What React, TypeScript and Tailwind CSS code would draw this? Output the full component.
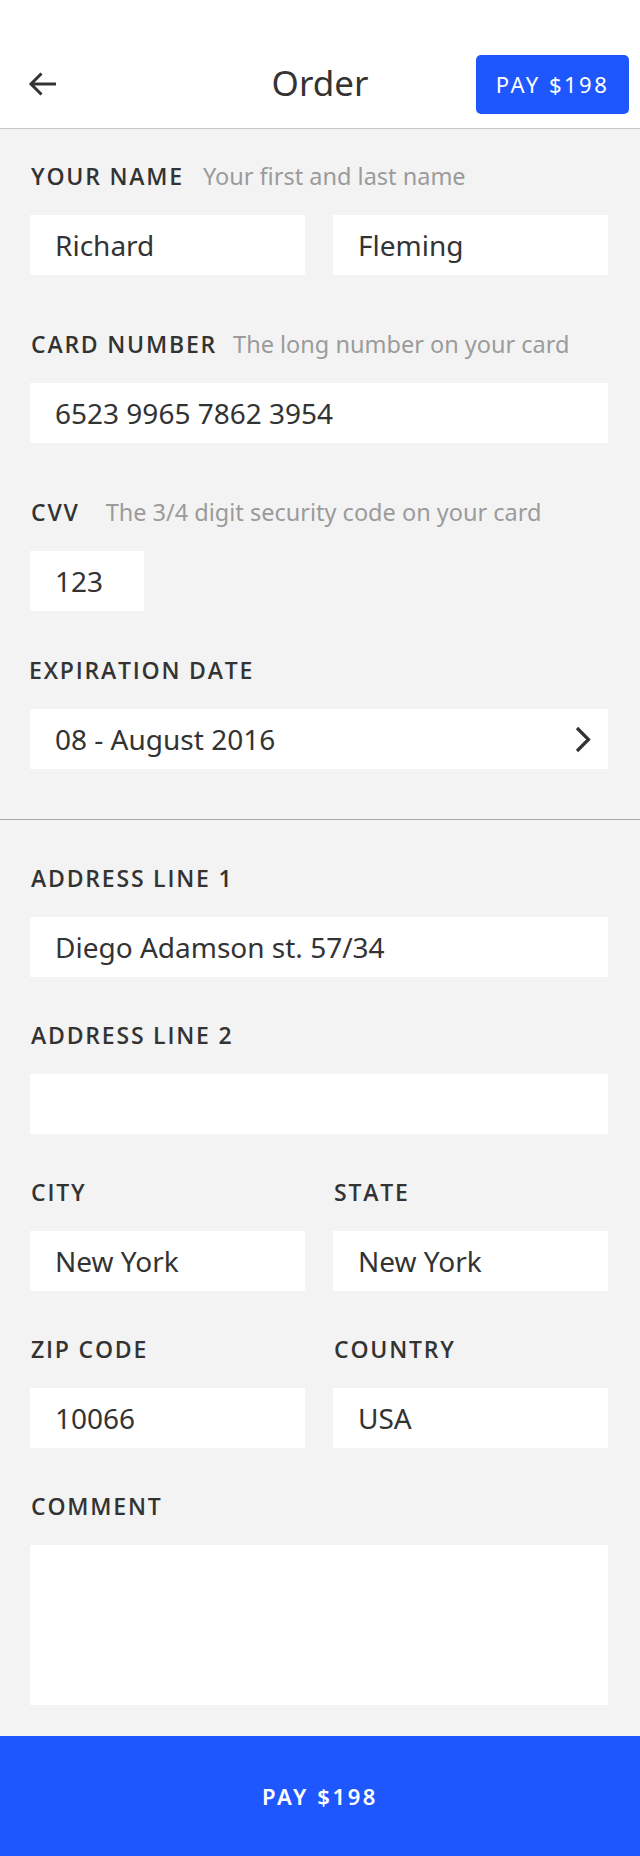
import React from 'react';

const font = { fontFamily: '"Noto Sans", "Open Sans", sans-serif' };
const labelFont = { fontFamily: '"Open Sans", "Noto Sans", sans-serif' };

function Label({ text, hint, hintGap = 'ml-[20px]', className = '' }: { text: string; hint?: string; hintGap?: string; className?: string }) {
  return (
    <div className={`flex items-baseline h-8 leading-8 pl-px ${className}`}>
      <span className="text-[23px] font-semibold tracking-[1.8px] text-[#333]" style={labelFont}>
        {text}
      </span>
      {hint && <span className={`text-[23.5px] text-[#9b9b9b] ${hintGap}`}>{hint}</span>}
    </div>
  );
}

function Box({ value, className = '', children }: { value?: string; className?: string; children?: React.ReactNode }) {
  return (
    <div className={`h-[60px] bg-white flex items-center pl-[25px] text-[28px] text-[#333] ${className}`}>
      <span className="flex-1">{value}</span>
      {children}
    </div>
  );
}

export default function App() {
  return (
    <div className="w-[640px] h-[1856px] bg-[#f3f3f3] flex flex-col" style={font}>
      <header className="bg-white pt-10 border-b border-[#c8c8c8]">
        <div className="h-[88px] px-[11px] grid grid-cols-[1fr_auto_1fr] items-center">
          <div className="pl-[17px]">
            <svg width="28" height="24" viewBox="0 0 28 24" fill="none" stroke="#333" strokeWidth="3">
              <path d="M28 12H3" />
              <path d="M13.5 1.5L3 12l10.5 10.5" />
            </svg>
          </div>
          <h1 className="text-[35px] text-[#333] leading-none -mt-[4px]">Order</h1>
          <div className="flex justify-end">
            <button className="w-[153px] h-[59px] rounded-[5px] bg-[#1f57ff] text-white text-[22px] tracking-[2.5px]">
              PAY $198
            </button>
          </div>
        </div>
      </header>

      <section className="pt-[31px] pb-[50px] pl-[30px] pr-[32px] border-b border-[#aaaaaa]">
        <Label text="YOUR NAME" hint="Your first and last name" hintGap="ml-[19px]" />
        <div className="mt-[23px] grid grid-cols-2 gap-[28px]">
          <Box value="Richard" />
          <Box value="Fleming" />
        </div>

        <Label className="mt-[53px]" text="CARD NUMBER" hint="The long number on your card" hintGap="ml-[16px]" />
        <Box className="mt-[23px]" value="6523 9965 7862 3954" />

        <Label className="mt-[53px]" text="CVV" hint="The 3/4 digit security code on your card" hintGap="ml-[26px]" />
        <Box className="mt-[23px] w-[114px]" value="123" />

        <Label className="mt-[43px] -ml-[2px]" text="EXPIRATION DATE" />
        <Box className="mt-[23px] pr-[17px]" value="08 - August 2016">
          <svg width="16" height="27" viewBox="0 0 16 27" fill="none" stroke="#333" strokeWidth="3.2">
            <path d="M2 2l11.5 11.5L2 25" />
          </svg>
        </Box>
      </section>

      <section className="pt-[42px] pl-[30px] pr-[32px] flex-1">
        <Label text="ADDRESS LINE 1" />
        <Box className="mt-[23px]" value="Diego Adamson st. 57/34" />

        <Label className="mt-[42px]" text="ADDRESS LINE 2" />
        <Box className="mt-[23px]" />

        <div className="mt-[42px] grid grid-cols-2 gap-x-[28px]">
          <div>
            <Label text="CITY" />
            <Box className="mt-[23px]" value="New York" />
          </div>
          <div>
            <Label text="STATE" />
            <Box className="mt-[23px]" value="New York" />
          </div>
        </div>

        <div className="mt-[42px] grid grid-cols-2 gap-x-[28px]">
          <div>
            <Label text="ZIP CODE" />
            <Box className="mt-[23px]" value="10066" />
          </div>
          <div>
            <Label text="COUNTRY" />
            <Box className="mt-[23px]" value="USA" />
          </div>
        </div>

        <Label className="mt-[42px]" text="COMMENT" />
        <div className="mt-[23px] h-[160px] bg-white" />
      </section>

      <button className="h-[120px] shrink-0 bg-[#1f57ff] text-white text-[22px] font-semibold tracking-[2.6px]">
        PAY $198
      </button>
    </div>
  );
}
